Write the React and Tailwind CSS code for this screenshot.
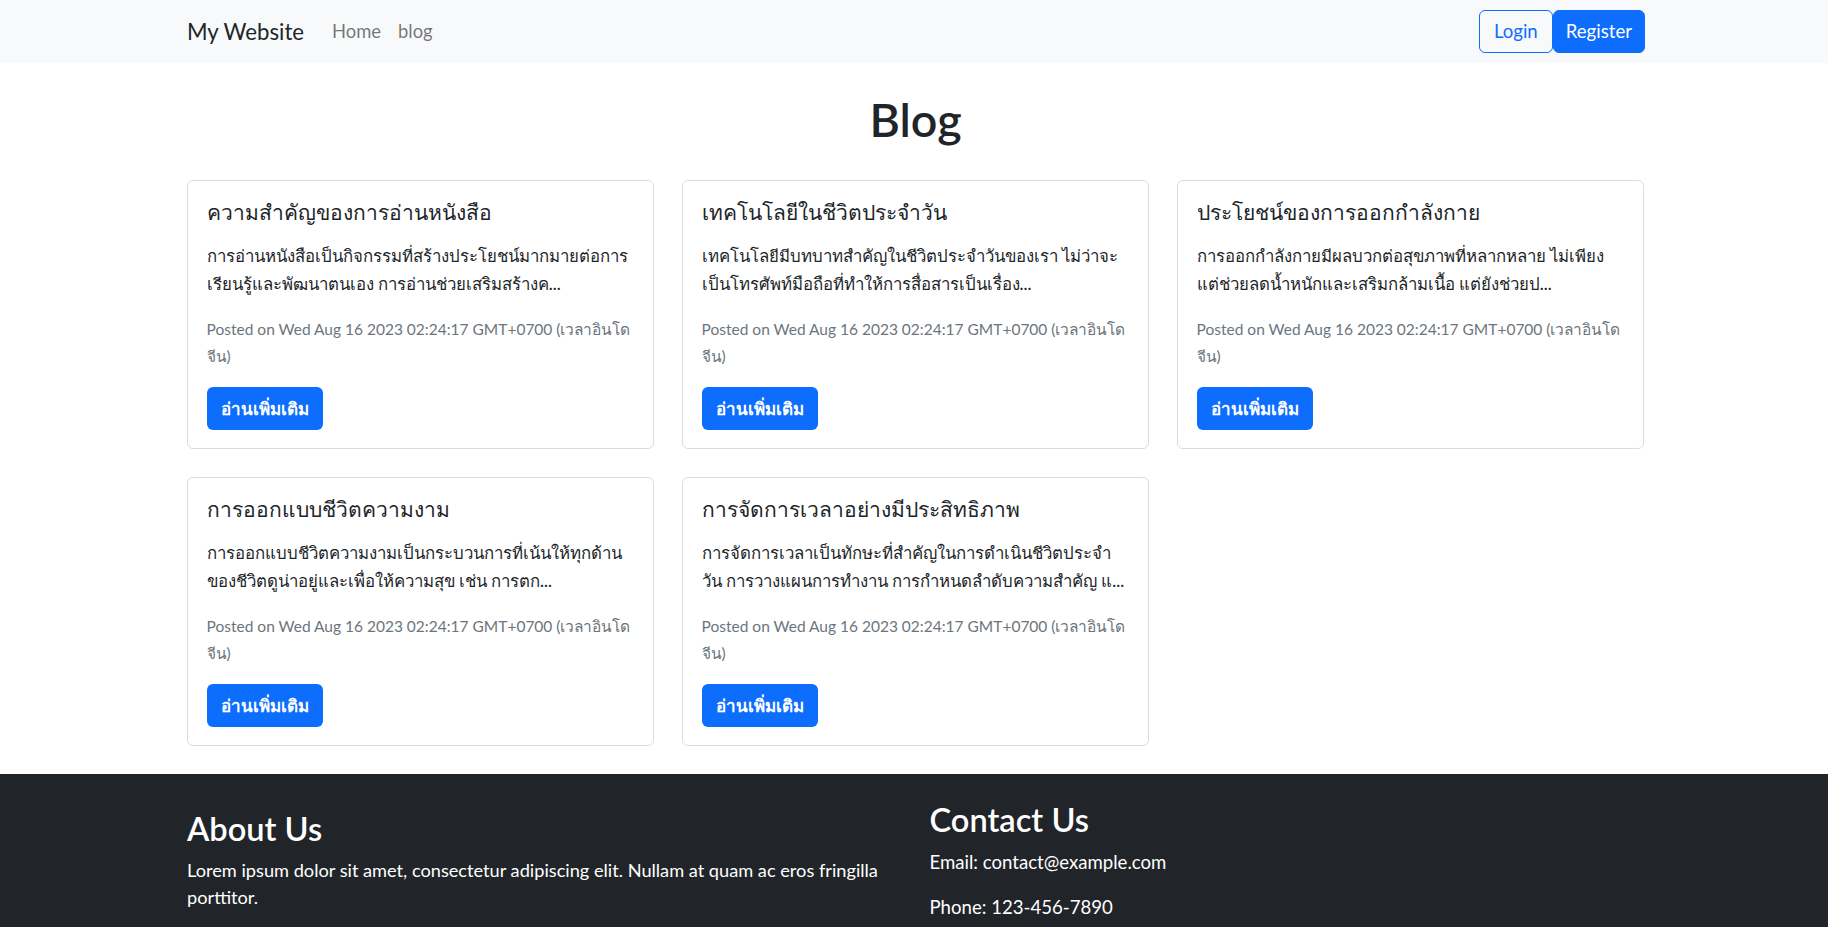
import React from 'react';

const posts = [
  {
    title: 'ความสำคัญของการอ่านหนังสือ',
    lines: ['การอ่านหนังสือเป็นกิจกรรมที่สร้างประโยชน์มากมายต่อการ', 'เรียนรู้และพัฒนาตนเอง การอ่านช่วยเสริมสร้างค...'],
  },
  {
    title: 'เทคโนโลยีในชีวิตประจำวัน',
    lines: ['เทคโนโลยีมีบทบาทสำคัญในชีวิตประจำวันของเรา ไม่ว่าจะ', 'เป็นโทรศัพท์มือถือที่ทำให้การสื่อสารเป็นเรื่อง...'],
  },
  {
    title: 'ประโยชน์ของการออกกำลังกาย',
    lines: ['การออกกำลังกายมีผลบวกต่อสุขภาพที่หลากหลาย ไม่เพียง', 'แต่ช่วยลดน้ำหนักและเสริมกล้ามเนื้อ แต่ยังช่วยป...'],
  },
  {
    title: 'การออกแบบชีวิตความงาม',
    lines: ['การออกแบบชีวิตความงามเป็นกระบวนการที่เน้นให้ทุกด้าน', 'ของชีวิตดูน่าอยู่และเพื่อให้ความสุข เช่น การตก...'],
  },
  {
    title: 'การจัดการเวลาอย่างมีประสิทธิภาพ',
    lines: ['การจัดการเวลาเป็นทักษะที่สำคัญในการดำเนินชีวิตประจำ', 'วัน การวางแผนการทำงาน การกำหนดลำดับความสำคัญ แ...'],
  },
];

export default function App() {
  return (
    <div className="min-h-screen bg-white text-[#212529] font-['Lato','Noto_Sans',sans-serif]">
      {/* Navbar */}
      <nav className="h-[63px] bg-[#f8f9fa]">
        <div className="h-full pl-[187px] pr-[183px] flex items-center justify-between">
          <div className="flex items-center">
            <a href="#" className="text-[22.2px] mr-[28px]">My Website</a>
            <div className="flex items-center gap-[17px] text-[18.4px] text-black/55">
              <a href="#">Home</a>
              <a href="#">blog</a>
            </div>
          </div>
          <div className="flex items-center">
            <button className="h-[43px] px-[14px] text-[18.6px] text-[#0d6efd] border border-[#0d6efd] rounded-[6px]">Login</button>
            <button className="h-[43px] px-[12px] text-[18.6px] text-white bg-[#0d6efd] border border-[#0d6efd] rounded-[6px]">Register</button>
          </div>
        </div>
      </nav>

      {/* Blog list */}
      <main className="pl-[187px] pr-[184px]">
        <h1 className="mt-[28px] mb-[33px] text-center text-[46.6px] leading-[56px] font-semibold">Blog</h1>

        <div className="grid grid-cols-3 gap-[28px]">
          {posts.map((post, i) => (
            <div key={i} className="border border-[#dcdcdc] rounded-[6px] px-[18.6px] pt-[17px] pb-[18px]">
              <h5 className="text-[21px] leading-[28px] mb-[15.6px] whitespace-nowrap">{post.title}</h5>
              <p className="text-[16.8px] leading-[28px] font-medium mb-[18px]">
                {post.lines.map((l, j) => (
                  <span key={j} className="block whitespace-nowrap">{l}</span>
                ))}
              </p>
              <p className="text-[15.5px] leading-[27px] text-[#6c757d] mb-[17.5px]">
                <span className="block whitespace-nowrap">Posted on Wed Aug 16 2023 02:24:17 GMT+0700 (เวลาอินโด</span>
                <span className="block">จีน)</span>
              </p>
              <button className="h-[43px] px-[14px] text-[17px] font-semibold text-white bg-[#0d6efd] rounded-[6px]">อ่านเพิ่มเติม</button>
            </div>
          ))}
        </div>
      </main>

      {/* Footer */}
      <footer className="mt-[28px] bg-[#212529] text-white pt-[26px] pb-[28px]">
        <div className="pl-[187px] pr-[184px] grid grid-cols-2 gap-[28px]">
          <div className="mt-[9px]">
            <h3 className="text-[32.6px] leading-[39px] font-semibold mb-[9px]">About Us</h3>
            <p className="text-[18.2px] leading-[27px] mb-[18.6px]">
              Lorem ipsum dolor sit amet, consectetur adipiscing elit. Nullam at quam ac eros fringilla porttitor.
            </p>
          </div>
          <div>
            <h3 className="text-[32.6px] leading-[39px] font-semibold mb-[9px]">Contact Us</h3>
            <p className="text-[18.6px] leading-[28px] mb-[17px]">Email: contact@example.com</p>
            <p className="text-[18.6px] leading-[28px] mb-[18.6px]">Phone: 123-456-7890</p>
          </div>
        </div>
      </footer>
    </div>
  );
}
